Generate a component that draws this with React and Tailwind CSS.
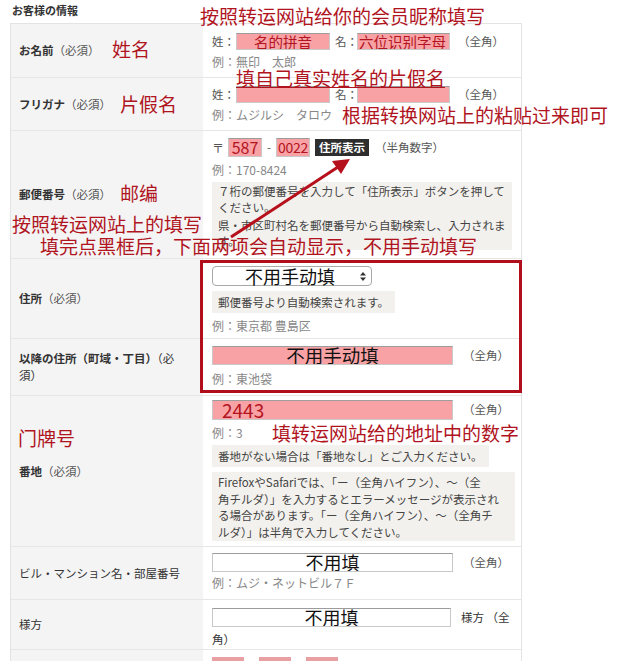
import React from 'react';

const jp = { fontFamily: '"Noto Sans CJK JP", "Noto Sans", sans-serif' };
const sc = { fontFamily: '"Noto Sans CJK SC", sans-serif' };

function Box({ className = '', children }) {
  return (
    <div
      className={`border border-[#c9c9c9] border-t-[#9c9c9c] flex items-center overflow-hidden whitespace-nowrap ${className}`}
    >
      {children}
    </div>
  );
}

function Note({ className = '', children }) {
  return <div className={`bg-[#f3f1ed] px-[6px] text-[11.5px] text-[#444] ${className}`}>{children}</div>;
}

function Ex({ children, className = '' }) {
  return <div className={`text-[12px] leading-[16px] text-[#888] ${className}`}>{children}</div>;
}

function Label({ name, req, children }) {
  return (
    <div className="w-[192px] shrink-0 bg-[#f4f4f4] flex items-center pl-[8px] text-[11.5px] leading-[17px] text-[#333]">
      {children || (
        <span>
          {req ? <b className="font-bold">{name}</b> : name}
          {req && <span className="text-[#555]">（必須）</span>}
        </span>
      )}
    </div>
  );
}

function Anno({ className = '', children }) {
  return (
    <div className={`absolute whitespace-nowrap text-[19px] leading-[19px] text-[#b0141e] ${className}`} style={sc}>
      {children}
    </div>
  );
}

export default function App() {
  return (
    <div className="relative w-[640px] h-[661px] overflow-hidden bg-white" style={jp}>
      <div className="h-[23px] pl-[12px] pt-[3px] text-[11px] leading-[14px] font-bold text-[#333]">お客様の情報</div>

      <div className="ml-[10px] w-[512px] border border-[#e3e3e3] text-[11.5px] text-[#555]">
        {/* お名前 */}
        <div className="flex h-[53px]">
          <Label name="お名前" req />
          <div className="flex-1 pl-[9px] pt-[9px]">
            <div className="flex items-center h-[17px]">
              <span className="w-[24px]">姓：</span>
              <Box className="w-[94px] h-[17px] bg-[#f8a2a5] justify-center">
                <span className="text-[14.5px] leading-[15px] text-[#b3141f]" style={sc}>名的拼音</span>
              </Box>
              <span className="ml-[5px] w-[22px]">名：</span>
              <Box className="w-[93px] h-[17px] bg-[#f8a2a5] pl-[1px]">
                <span className="text-[14.5px] leading-[15px] text-[#b3141f]" style={sc}>六位识别字母</span>
              </Box>
              <span className="ml-[8px]">（全角）</span>
            </div>
            <Ex className="mt-[4px]">例：無印　太郎</Ex>
          </div>
        </div>

        {/* フリガナ */}
        <div className="flex h-[53px] border-t border-[#e6e6e6]">
          <Label name="フリガナ" req />
          <div className="flex-1 pl-[9px] pt-[8px]">
            <div className="flex items-center h-[17px]">
              <span className="w-[24px]">姓：</span>
              <Box className="w-[94px] h-[17px] bg-[#f8a2a5]" />
              <span className="ml-[5px] w-[22px]">名：</span>
              <Box className="w-[93px] h-[17px] bg-[#f8a2a5]" />
              <span className="ml-[8px]">（全角）</span>
            </div>
            <Ex className="mt-[4px]">例：ムジルシ　タロウ</Ex>
          </div>
        </div>

        {/* 郵便番号 */}
        <div className="flex h-[128px] border-t border-[#e6e6e6]">
          <Label name="郵便番号" req />
          <div className="flex-1 pl-[9px] pt-[7px]">
            <div className="flex items-center h-[19px]">
              <span className="w-[16px] text-[12px]">〒</span>
              <Box className="w-[34px] h-[19px] bg-[#f8a2a5] justify-center">
                <span className="text-[16px] leading-[17px] text-[#b3141f]">587</span>
              </Box>
              <span className="w-[14px] text-center">-</span>
              <Box className="w-[34px] h-[19px] bg-[#f8a2a5] justify-center">
                <span className="text-[14px] leading-[17px] tracking-[-0.3px] text-[#b3141f]">0022</span>
              </Box>
              <div className="ml-[5px] w-[54px] h-[17px] bg-[#2e2e2e] text-white font-bold text-[11.5px] leading-[17px] flex items-center justify-center">住所表示</div>
              <span className="ml-[6px]">（半角数字）</span>
            </div>
            <Ex className="mt-[5px] text-[12.5px]">例：170-8424</Ex>
            <Note className="mt-[4px] w-[300px] h-[68px] py-[1px] leading-[16px]">
              <p>７桁の郵便番号を入力して「住所表示」ボタンを押して</p>
              <p>ください。</p>
              <p className="mt-[2px]">県・市区町村名を郵便番号から自動検索し、入力されま</p>
              <p>す。</p>
            </Note>
          </div>
        </div>

        {/* 住所 */}
        <div className="flex h-[80px] border-t border-[#e6e6e6]">
          <Label name="住所" req />
          <div className="flex-1 pl-[9px] pt-[7px]">
            <div className="relative w-[160px] h-[20px] border border-[#a8a8a8] rounded-[4px] bg-white flex items-center">
              <span className="ml-[32px] text-[18px] leading-[18px] text-[#111]" style={sc}>不用手动填</span>
              <svg className="absolute right-[5px] top-[5px]" width="6" height="9" viewBox="0 0 6 9">
                <path d="M3 0 L6 3.5 L0 3.5 Z M3 9 L6 5.5 L0 5.5 Z" fill="#333" />
              </svg>
            </div>
            <Note className="mt-[5px] w-fit h-[22px] leading-[22px]">郵便番号より自動検索されます。</Note>
            <Ex className="mt-[5px]">例：東京都 豊島区</Ex>
          </div>
        </div>

        {/* 以降の住所 */}
        <div className="flex h-[57px] border-t border-[#e6e6e6]">
          <Label>
            <span>
              <b className="font-bold">以降の住所（町域・丁目）</b>（必<br />須）
            </span>
          </Label>
          <div className="flex-1 pl-[9px] pt-[7px]">
            <div className="flex items-center">
              <Box className="w-[241px] h-[19px] bg-[#f8a2a5] justify-center">
                <span className="text-[18.5px] leading-[17px] text-[#111]" style={sc}>不用手动填</span>
              </Box>
              <span className="ml-[10px]">（全角）</span>
            </div>
            <Ex className="mt-[6px]">例：東池袋</Ex>
          </div>
        </div>

        {/* 番地 */}
        <div className="flex h-[151px] border-t border-[#e6e6e6]">
          <Label name="番地" req />
          <div className="flex-1 pl-[9px] pt-[4px]">
            <div className="flex items-center">
              <Box className="w-[241px] h-[20px] bg-[#f8a2a5] pl-[9px]">
                <span className="text-[19px] leading-[18px] text-[#b3141f]">2443</span>
              </Box>
              <span className="ml-[10px]">（全角）</span>
            </div>
            <Ex className="mt-[5px] text-[12.5px]">例：3</Ex>
            <Note className="mt-[4px] w-fit h-[22px] leading-[22px]">番地がない場合は「番地なし」とご入力ください。</Note>
            <Note className="mt-[5px] w-[303px] h-[69px] py-[2px] leading-[16.5px]">
              <p>FirefoxやSafariでは、「ー（全角ハイフン）、〜（全</p>
              <p>角チルダ）」を入力するとエラーメッセージが表示され</p>
              <p>る場合があります。「ー（全角ハイフン）、〜（全角チ</p>
              <p>ルダ）」は半角で入力してください。</p>
            </Note>
          </div>
        </div>

        {/* ビル・マンション名 */}
        <div className="flex h-[53px] border-t border-[#e6e6e6]">
          <Label name="ビル・マンション名・部屋番号" />
          <div className="flex-1 pl-[9px] pt-[6px]">
            <div className="flex items-center">
              <Box className="w-[241px] h-[19px] bg-white justify-center">
                <span className="text-[18px] leading-[17px] text-[#111]" style={sc}>不用填</span>
              </Box>
              <span className="ml-[10px]">（全角）</span>
            </div>
            <Ex className="mt-[3px]">例：ムジ・ネットビル７Ｆ</Ex>
          </div>
        </div>

        {/* 様方 */}
        <div className="flex h-[50px] border-t border-[#e6e6e6]">
          <Label name="様方" />
          <div className="flex-1 pl-[9px] pt-[8px]">
            <div className="flex items-center">
              <Box className="w-[239px] h-[19px] bg-white justify-center">
                <span className="text-[18px] leading-[17px] text-[#111]" style={sc}>不用填</span>
              </Box>
              <span className="ml-[10px] text-[#333]">様方 （全</span>
            </div>
            <div className="mt-[4px] leading-[16px] text-[#333]">角）</div>
          </div>
        </div>

        {/* next row */}
        <div className="flex h-[30px] border-t border-[#e6e6e6]">
          <Label name="" />
          <div className="flex-1 pl-[9px] pt-[7px] flex gap-[15px]">
            <div className="w-[32px] h-[19px] bg-[#e8a0a3]" />
            <div className="w-[32px] h-[19px] bg-[#e8a0a3]" />
            <div className="w-[32px] h-[19px] bg-[#e8a0a3]" />
          </div>
        </div>
      </div>

      {/* red outline over 住所 rows */}
      <div className="absolute left-[200px] top-[260px] w-[322px] h-[133px] border-[3px] border-[#b10e1c]" />

      {/* arrow */}
      <svg className="absolute left-0 top-0 pointer-events-none" width="640" height="661">
        <line x1="231" y1="237" x2="338" y2="167" stroke="#b5101c" strokeWidth="3" />
        <polygon points="350,159 341,174 332,161" fill="#b5101c" />
      </svg>

      <Anno className="left-[200px] top-[6px]">按照转运网站给你的会员昵称填写</Anno>
      <Anno className="left-[112px] top-[39px]">姓名</Anno>
      <Anno className="left-[236px] top-[68px] underline decoration-[1px] underline-offset-[1px]">填自己真实姓名的片假名</Anno>
      <Anno className="left-[120px] top-[94px]">片假名</Anno>
      <Anno className="left-[342px] top-[105px]">根据转换网站上的粘贴过来即可</Anno>
      <Anno className="left-[120px] top-[183px]">邮编</Anno>
      <Anno className="left-[12px] top-[214px]">按照转运网站上的填写</Anno>
      <Anno className="left-[40px] top-[236px]">填完点黑框后，下面两项会自动显示，不用手动填写</Anno>
      <Anno className="left-[18px] top-[428px]">门牌号</Anno>
      <Anno className="left-[272px] top-[423px]">填转运网站给的地址中的数字</Anno>
    </div>
  );
}
